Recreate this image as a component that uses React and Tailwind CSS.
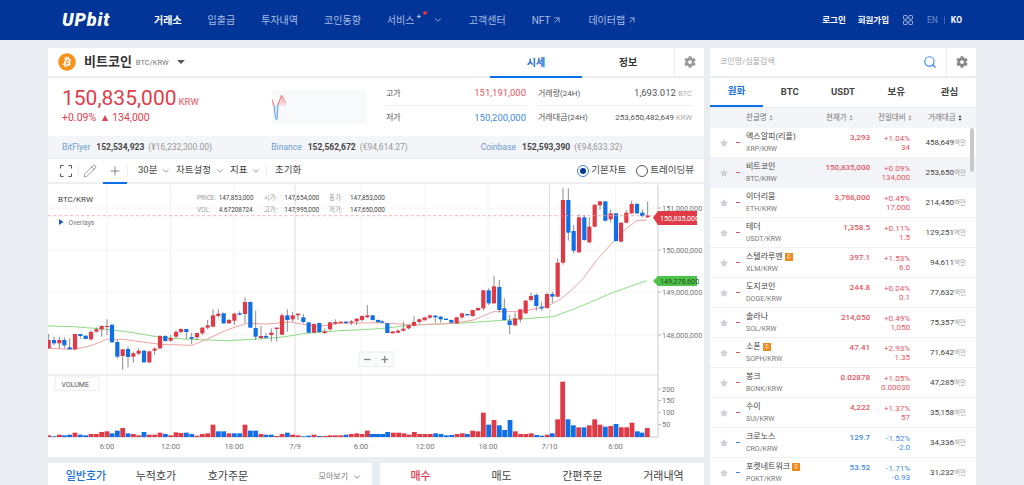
import React from 'react';
import { ChevronDown, ArrowUpRight, Pencil, Plus, Search } from 'lucide-react';
import { FaCog, FaStar, FaBitcoin } from 'react-icons/fa';

const RED = '#e03a47';
const BLUE = '#0f6fe6';

const z5 = [[26,300,325,282,325,'r'],[42,300,310,290,315,'b'],[58,300,310,290,327,'r'],[73,300,316,292,325,'b'],[89,322,328,295,328,'b'],[105,282,328,282,330,'r'],[121,282,288,282,296,'b'],[137,287,297,287,297,'b'],[153,276,298,270,302,'r'],[169,268,275,262,278,'r'],[185,258,268,255,290,'r'],[201,258,260,238,285,'r'],[216,254,307,254,308,'b'],[232,306,350,300,356,'b'],[248,328,348,328,390,'r'],[264,327,351,320,382,'b'],[280,340,350,335,368,'r'],[296,332,341,325,345,'r'],[312,332,367,330,368,'b'],[328,334,367,332,370,'r'],[344,326,332,322,345,'r'],[360,288,325,285,328,'r'],[376,288,303,286,305,'b'],[392,294,302,285,305,'r'],[408,276,290,270,295,'r'],[423,267,276,265,280,'r'],[439,267,276,267,298,'b'],[455,291,296,278,312,'b'],[471,279,292,278,300,'r'],[487,263,280,262,285,'r'],[503,256,263,240,268,'r'],[519,226,260,208,262,'r'],[535,221,228,208,233,'r'],[551,220,250,218,252,'b'],[567,240,250,236,252,'r'],[583,221,242,218,255,'r'],[599,220,224,214,226,'b'],[615,186,222,172,250,'r'],[631,186,263,184,264,'b'],[647,264,290,212,300,'b'],[663,288,294,258,298,'r'],[678,288,293,280,295,'b'],[694,278,285,265,305,'r'],[710,263,267,262,305,'r'],[726,226,284,220,285,'r'],[742,226,240,208,275,'b'],[758,226,238,215,245,'r'],[774,221,226,220,240,'r'],[790,232,246,222,250,'b'],[806,247,278,247,280,'b'],[822,252,278,250,280,'r'],[838,249,276,248,278,'b'],[854,274,279,265,282,'r'],[870,247,268,246,272,'r'],[886,246,251,238,254,'r'],[902,245,249,245,249,'r'],[918,245,249,243,252,'b'],[934,244,248,240,255,'r'],[950,236,244,234,255,'r'],[966,228,240,226,245,'r'],[982,226,232,195,234,'r'],[998,226,240,225,242,'b'],[1014,240,246,238,250,'b']];
const z6 = [[6,184,188,180,190,'b'],[22,190,219,190,219,'b'],[38,214,220,214,220,'r'],[54,212,218,208,220,'r'],[70,206,212,185,215,'r'],[86,196,205,194,208,'r'],[102,186,197,168,200,'r'],[118,178,186,175,190,'r'],[134,172,181,172,181,'r'],[150,166,173,164,176,'r'],[166,167,172,165,188,'b'],[182,170,178,168,188,'b'],[198,176,180,176,180,'b'],[214,180,188,178,190,'b'],[230,172,190,172,192,'r'],[246,160,172,158,178,'r'],[262,162,166,162,166,'b'],[278,150,168,150,170,'r'],[294,144,151,142,153,'r'],[310,91,145,90,152,'r'],[326,91,130,85,135,'b'],[342,79,130,48,132,'r'],[358,81,150,60,158,'b'],[373,145,180,115,182,'b'],[389,182,195,165,222,'b'],[405,175,196,158,198,'r'],[421,148,178,148,188,'r'],[437,122,160,120,162,'r'],[453,108,120,98,124,'r'],[469,105,138,100,152,'b'],[485,140,145,126,152,'b'],[501,102,144,98,146,'r'],[517,102,110,95,128,'b'],[533,8,110,-5,112,'r']];
const z4 = [[549,210,398,175,404,'r'],[565,210,308,175,332,'b'],[581,303,362,285,370,'b'],[597,262,367,252,368,'r'],[613,262,330,255,332,'b'],[628,290,337,262,340,'r'],[644,224,290,224,292,'r'],[660,214,226,212,240,'r'],[676,214,272,214,275,'b'],[692,250,268,238,278,'r'],[708,250,333,250,335,'b'],[723,278,335,278,337,'r'],[739,248,278,240,280,'r'],[755,222,250,212,252,'r'],[771,222,250,218,252,'b'],[787,248,258,238,262,'b'],[803,256,262,214,264,'r']];

const conv = (arr, ox, oy) => arr.map(([x, t, b, wt, wb, c]) => ({ x: ox + x / 3, t: oy + t / 3, b: oy + b / 3, wt: oy + wt / 3, wb: oy + wb / 3, c }));
const candles = [...conv(z5, 40, 240), ...conv(z6, 380, 260), ...conv(z4, 380, 130)];

const vol7 = [[26,'r',196],[42,'b',199],[58,'r',194],[73,'b',196],[89,'b',194],[105,'r',188],[121,'b',194],[137,'b',196],[153,'r',192],[169,'r',192],[185,'r',186],[201,'r',184],[216,'b',190],[232,'b',182],[248,'r',174],[264,'b',190],[280,'r',192],[296,'r',196],[312,'b',186],[328,'r',194],[344,'r',194],[360,'r',188],[376,'b',192],[392,'r',196],[408,'r',187],[423,'r',189],[439,'b',188],[455,'b',192],[471,'r',197],[487,'r',192],[503,'r',190],[519,'r',164],[535,'b',184],[551,'b',184],[567,'r',190],[583,'b',190],[599,'b',190],[615,'r',164],[631,'b',182],[647,'b',182],[663,'r',192],[678,'b',194],[694,'b',194],[710,'r',198],[726,'r',192],[742,'b',188],[758,'r',194],[774,'r',196],[790,'b',199],[806,'b',197],[822,'r',194],[838,'b',198],[854,'r',198],[870,'r',196],[886,'r',196],[902,'r',196],[918,'b',194],[934,'r',192],[950,'r',190],[966,'r',192],[982,'r',182],[998,'b',192],[1014,'b',192]];
const vol8 = [[5,'b',192],[22,'b',192],[38,'b',192],[53,'b',186],[70,'r',188],[86,'r',188],[102,'r',190],[117,'r',194],[133,'r',186],[149,'r',192],[165,'r',192],[181,'r',192],[197,'b',190],[213,'b',192],[229,'b',196],[245,'b',195],[261,'r',192],[277,'r',190],[292,'b',192],[308,'r',182],[324,'r',184],[340,'r',128],[356,'b',164],[372,'r',150],[388,'b',166],[404,'b',180],[420,'b',150],[436,'r',184],[452,'r',192],[468,'r',192],[484,'r',190],[500,'b',195],[516,'b',197],[532,'r',194],[547,'b',190],[563,'r',148],[578,'r',35],[594,'b',148],[610,'b',166],[626,'r',172],[642,'b',172],[658,'r',166],[674,'r',148],[690,'r',164],[706,'b',170],[722,'r',168],[738,'b',162],[754,'r',172],[770,'r',172],[786,'r',158],[802,'b',184],[816,'b',188],[832,'r',174]];
const bars = [...vol7.map(([x, c, t]) => ({ x: 40 + x / 3, c, t: 370 + t / 3 })), ...vol8.map(([x, c, t]) => ({ x: 370 + x / 3, c, t: 370 + t / 3 }))];

const pts = (arr, ox, oy) => arr.map(([x, y]) => `${ox + x / 3},${oy + y / 3}`);
const redLine = [
  ...pts([[24,325],[100,328],[150,318],[200,298],[250,298],[300,305],[360,313],[455,316],[500,298],[560,270],[620,250],[680,252],[750,246],[830,260],[900,250],[1020,248]], 40, 240),
  ...pts([[100,195],[220,190],[280,180],[340,155],[420,155],[500,140],[540,118],[575,90],[610,55]], 380, 260),
  ...pts([[650,390],[700,335],[740,295],[770,272],[800,270]], 380, 130),
].join(' ');
const greenLine = [
  ...pts([[24,258],[100,260],[200,268],[280,278],[360,292],[450,298],[560,302],[640,298],[720,292],[800,280],[900,272],[1020,266]], 40, 240),
  ...pts([[100,195],[230,190],[370,181],[520,170],[600,140],[700,97],[800,62]], 380, 260),
].join(' ');

const vGrid = [[107,0],[170.5,0],[234,0],[295,1],[361,0],[425,0],[488,0],[549.5,1],[615.5,0]];
const timeLabels = [[107,'6:00'],[170.5,'12:00'],[234,'18:00'],[295,'7/9'],[361,'6:00'],[425,'12:00'],[488,'18:00'],[549.5,'7/10'],[615.5,'6:00']];

function Chart() {
  return (
    <svg viewBox="48 185 656 272" className="block w-full h-68 mt-px" fontFamily="Roboto, 'Noto Sans CJK KR', sans-serif">
      {[208, 250, 292, 335].map((y) => <line key={y} x1="48" x2="658" y1={y} y2={y} stroke="#f4f4f6" />)}
      {vGrid.map(([x, d]) => <line key={x} x1={x} x2={x} y1="185" y2="437" stroke={d ? '#dcdde0' : '#f2f3f5'} />)}
      <line x1="48" x2="658" y1="375" y2="375" stroke="#dddddd" strokeWidth="1" />
      <line x1="658" x2="658" y1="185" y2="437" stroke="#cccccc" />
      <line x1="48" x2="658" y1="437" y2="437" stroke="#cccccc" />
      <polyline points={greenLine} fill="none" stroke="#8fdb86" strokeWidth="1" />
      <polyline points={redLine} fill="none" stroke="#f0a3a3" strokeWidth="1" />
      {candles.map((c, i) => (
        <g key={i}>
          <line x1={c.x} x2={c.x} y1={c.wt} y2={c.wb} stroke="#6b6f78" strokeWidth="0.8" />
          <rect x={c.x - 2.1} y={c.t} width="4.2" height={Math.max(c.b - c.t, 1)} fill={c.c === 'r' ? RED : BLUE} />
        </g>
      ))}
      {bars.map((b, i) => <rect key={i} x={b.x - 2.4} y={b.t} width="4.8" height={437 - b.t} fill={b.c === 'r' ? RED : BLUE} />)}
      <line x1="48" x2="654" y1="215.7" y2="215.7" stroke="#f39ca2" strokeWidth="0.8" strokeDasharray="3 2.5" />

      <text x="58" y="202" fontSize="8" fill="#444">BTC/KRW</text>
      <g fontSize="6.4" fill="#444">
        <text x="197" y="200" fill="#999">PRICE:</text><text x="218.7" y="200">147,853,000</text>
        <text x="263.7" y="200" fill="#999">시가:</text><text x="284.3" y="200">147,654,000</text>
        <text x="329" y="200" fill="#999">종가:</text><text x="350" y="200">147,853,000</text>
        <text x="197" y="211.5" fill="#999">VOL:</text><text x="218.7" y="211.5">4.67208724</text>
        <text x="263.7" y="211.5" fill="#999">고가:</text><text x="284.3" y="211.5">147,995,000</text>
        <text x="329" y="211.5" fill="#999">저가:</text><text x="350" y="211.5">147,650,000</text>
      </g>
      <polygon points="59,219 63.5,222 59,225" fill="#1a5fc0" />
      <text x="68.5" y="224.5" fontSize="6.8" fill="#777">Overlays</text>

      <g fontSize="7.4" fill="#777">
        {[['151,000,000',208],['150,000,000',250],['149,000,000',292],['148,000,000',335]].map(([t, y]) => (
          <g key={t}><line x1="658" x2="661" y1={y} y2={y} stroke="#bbb" /><text x="662" y={y + 2.6}>{t}</text></g>
        ))}
        {[['200',389],['150',400.5],['100',412.5],['50',424.5]].map(([t, y]) => (
          <g key={t}><line x1="658" x2="661" y1={y} y2={y} stroke="#bbb" /><text x="662" y={y + 2.6}>{t}</text></g>
        ))}
      </g>
      <g fontSize="7.6" fill="#777" textAnchor="middle">
        {timeLabels.map(([x, t]) => <text key={x} x={x} y="448.5">{t}</text>)}
      </g>

      <polygon points="653,217.5 658,211 697,211 697,225 658,225" fill={RED} />
      <text x="660" y="220.5" fontSize="7.2" fill="#fff">150,835,000</text>
      <polygon points="653,281 658,276 697,276 697,286 658,286" fill="#4fc24a" />
      <text x="660" y="283.6" fontSize="7.2" fill="#1f4f1f">149,278,600</text>

      <rect x="55" y="377" width="44" height="13.5" fill="#fff" stroke="#eceef1" />
      <text x="61.5" y="386.5" fontSize="7" fill="#555">VOLUME</text>
      <rect x="359" y="352" width="35" height="14.5" fill="#fafbfc" stroke="#eceef1" />
      <line x1="364" x2="370.5" y1="359.5" y2="359.5" stroke="#888" strokeWidth="1.3" />
      <line x1="381.5" x2="388" y1="359.5" y2="359.5" stroke="#888" strokeWidth="1.3" />
      <line x1="384.7" x2="384.7" y1="356" y2="363" stroke="#888" strokeWidth="1.3" />
    </svg>
  );
}

const SortIcon = ({ dark }) => (
  <svg viewBox="0 0 6 8" className="w-1 h-2 ml-0.5 inline-block" fill={dark ? '#333' : '#999'}>
    <path d="M3 0 5.5 3H.5zM3 8 .5 5h5z" />
  </svg>
);

const coins = [
  ['엑스알피(리플)', 'XRP/KRW', '3,293', '+1.04%', '34', '458,649', 'r'],
  ['비트코인', 'BTC/KRW', '150,835,000', '+0.09%', '134,000', '253,650', 'r', 0, 1],
  ['이더리움', 'ETH/KRW', '3,768,000', '+0.45%', '17,000', '214,450', 'r'],
  ['테더', 'USDT/KRW', '1,358.5', '+0.11%', '1.5', '129,251', 'r'],
  ['스텔라루멘', 'XLM/KRW', '397.1', '+1.53%', '6.0', '94,611', 'r', 1],
  ['도지코인', 'DOGE/KRW', '244.8', '+0.04%', '0.1', '77,632', 'r'],
  ['솔라나', 'SOL/KRW', '214,050', '+0.49%', '1,050', '75,357', 'r'],
  ['소폰', 'SOPH/KRW', '47.41', '+2.93%', '1.35', '71,642', 'r', 1],
  ['봉크', 'BONK/KRW', '0.02878', '+1.05%', '0.00030', '47,285', 'r'],
  ['수이', 'SUI/KRW', '4,222', '+1.37%', '57', '35,158', 'r'],
  ['크로노스', 'CRO/KRW', '129.7', '-1.52%', '-2.0', '34,336', 'b'],
  ['포켓네트워크', 'POKT/KRW', '53.52', '-1.71%', '-0.93', '31,232', 'b', 1],
];

function CoinRow({ c }) {
  const [name, sym, price, pct, diff, vol, dir, badge, active] = c;
  const color = dir === 'r' ? 'text-[#e5555f]' : 'text-[#3f8ae6]';
  return (
    <div className={`h-7.5 shrink-0 flex items-center pr-2.5 border-b border-[#f1f2f5] ${active ? 'bg-[#f3f4f7]' : 'bg-white'}`}>
      <div className="w-9 shrink-0 flex items-center pl-2.5 gap-2">
        <FaStar className="size-2 text-[#cfd1d6]" />
        <span className={`w-1 h-px ${dir === 'r' ? 'bg-[#e5555f]' : 'bg-[#3f8ae6]'}`} />
      </div>
      <div className="flex-1 min-w-0 flex flex-col">
        <div className="flex items-center gap-0.5 text-[8px] leading-3 text-[#444]">
          <span>{name}</span>
          {badge ? <span className="size-2 flex items-center justify-center bg-[#ee8a1c] text-white text-[5px] leading-none">주</span> : null}
        </div>
        <div className="text-[7px] leading-3 text-[#777]">{sym}</div>
      </div>
      <div className={`self-start pt-1 text-[8px] font-medium leading-3 ${color}`}>{price}</div>
      <div className={`w-10 shrink-0 text-right text-[8px] leading-[9px] ${color}`}>
        <div>{pct}</div>
        <div>{diff}</div>
      </div>
      <div className="w-14 shrink-0 text-right text-[8px] leading-3 text-[#444]">
        {vol}<span className="text-[6.5px] text-[#aaa]">백만</span>
      </div>
    </div>
  );
}

export default function App() {
  return (
    <div className="h-screen overflow-hidden bg-[#e9ecf1] font-['Roboto','Noto_Sans_CJK_KR',sans-serif]">
      <header className="h-10 bg-[#033599] flex items-center pl-15.5 text-[10px]">
        <div className="w-23 text-white text-lg font-black italic tracking-wider leading-none">UPbit</div>
        <nav className="flex items-center gap-6.5 text-[#a9bde2]">
          <span className="text-white font-bold">거래소</span>
          <span>입출금</span>
          <span>투자내역</span>
          <span>코인동향</span>
          <span className="flex items-center relative w-14">
            서비스
            <span className="text-[8px] leading-none ml-0.5 -mt-1.5 text-white">+</span>
            <span className="absolute left-9 -top-0.5 size-1 rounded-full bg-[#e0303c]" />
            <ChevronDown className="size-2.5 ml-auto" />
          </span>
          <span>고객센터</span>
          <span className="flex items-center gap-0.5">NFT <ArrowUpRight className="size-2.5" /></span>
          <span className="flex items-center gap-0.5">데이터랩 <ArrowUpRight className="size-2.5" /></span>
        </nav>
        <div className="ml-auto pr-15.5 flex items-center text-white text-[8.5px] font-bold">
          <span>로그인</span>
          <span className="ml-3">회원가입</span>
          <svg viewBox="0 0 10 10" className="size-2.5 ml-3.5" fill="none" stroke="#c3d0ea" strokeWidth="0.8">
            <rect x=".5" y=".5" width="3.7" height="3.7" rx=".8" /><rect x="5.8" y=".5" width="3.7" height="3.7" rx=".8" />
            <rect x=".5" y="5.8" width="3.7" height="3.7" rx=".8" /><rect x="5.8" y="5.8" width="3.7" height="3.7" rx=".8" />
          </svg>
          <span className="ml-3.5 text-[#5a7cc0] font-medium">EN</span>
          <span className="mx-1.5 w-px h-2 bg-[#3c62b0]" />
          <span>KO</span>
        </div>
      </header>

      <main className="flex gap-1.5 px-12 pt-2">
        <section className="w-164 shrink-0 flex flex-col gap-1.5">
          <div className="bg-white flex flex-col">
            <div className="h-7.5 flex items-stretch border-b-2 border-[#eceef2]">
              <div className="flex-1 flex items-center pl-2.5">
                <FaBitcoin className="size-4.5 text-[#f7931a] mr-2" />
                <span className="text-[13px] font-bold text-[#333]">비트코인</span>
                <span className="text-[7.5px] text-[#777] ml-1 mt-0.5">BTC/KRW</span>
                <span className="ml-2 border-x-4 border-t-4 border-x-transparent border-t-[#555]" />
              </div>
              <div className="w-23 -mb-0.5 border-b-2 border-[#0f6fe6] flex items-center justify-center text-[10px] font-bold text-[#1a6fd8]">시세</div>
              <div className="w-23 flex items-center justify-center text-[10px] font-bold text-[#333]">정보</div>
              <div className="w-7.5 border-l border-[#eceef2] flex items-center justify-center">
                <FaCog className="size-3 text-[#9a9a9a]" />
              </div>
            </div>

            <div className="h-14.5 flex">
              <div className="w-56 pl-3.5 pt-1.5 text-[#e23d4a]">
                <div className="flex items-baseline leading-7">
                  <span className="text-[21px]">150,835,000</span>
                  <span className="text-[9.5px] font-medium ml-0.5 text-[#e87a82]">KRW</span>
                </div>
                <div className="text-[10.5px] leading-3 -mt-1 flex items-center gap-1">
                  +0.09%
                  <span className="border-x-[3.5px] border-b-[6px] border-x-transparent border-b-[#e23d4a] ml-0.5" />
                  134,000
                </div>
              </div>
              <div className="w-28.5 pt-3">
                <svg viewBox="0 0 93 33" className="w-23.5 h-8.5 bg-[#f8f9fb]">
                  <path d="M0 10 L2 16 L3.5 15 L7 10 L9.5 5 L12 10 L14 13 L14 15 L0 15Z" fill="#f9d5d8" />
                  <path d="M0 9 L2 15 M6 14 L9.5 5 L12 10 L14 12" stroke="#e5555f" strokeWidth=".8" fill="none" />
                  <path d="M2 15 L3.5 28 L5 29 L6 14" stroke="#3f8ae6" strokeWidth=".8" fill="#dceafb" />
                </svg>
              </div>
              <div className="w-35 flex flex-col text-[8px] text-[#555]">
                <div className="h-6 mt-1 flex items-center justify-between border-b border-[#eceef2]">
                  <span>고가</span><span className="text-[9.5px] text-[#e5555f]">151,191,000</span>
                </div>
                <div className="h-6 flex items-center justify-between">
                  <span>저가</span><span className="text-[9.5px] text-[#3f8ae6]">150,200,000</span>
                </div>
              </div>
              <div className="w-38.5 ml-3 flex flex-col text-[8px] text-[#555]">
                <div className="h-6 mt-1 flex items-center justify-between border-b border-[#eceef2]">
                  <span>거래량(24H)</span><span className="text-[9.5px]">1,693.012 <span className="text-[7.5px] text-[#aaa]">BTC</span></span>
                </div>
                <div className="h-6 flex items-center justify-between">
                  <span>거래대금(24H)</span><span className="text-[8px]">253,650,482,649 <span className="text-[7.5px] text-[#aaa]">KRW</span></span>
                </div>
              </div>
            </div>

            <div className="h-5.5 bg-[#f4f5f8] grid grid-cols-3 items-center px-3.5 text-[8.5px]">
              {[['BitFlyer','152,534,923','(¥16,232,300.00)'],['Binance','152,562,672','(€94,614.27)'],['Coinbase','152,593,390','(€94,633.32)']].map(([n, p, e]) => (
                <div key={n} className="flex items-center gap-1.5">
                  <span className="text-[#6a9bd6]">{n}</span>
                  <span className="font-bold text-[#444]">{p}</span>
                  <span className="text-[#999] -ml-0.5">{e}</span>
                </div>
              ))}
            </div>

            <div className="h-6.5 flex items-stretch border-t border-[#eceef2] border-b-2 text-[9.5px] text-[#444]">
              <div className="w-6 flex items-center justify-end">
                <svg viewBox="0 0 12 12" className="size-3" fill="none" stroke="#555" strokeWidth="1">
                  <path d="M.5 3.5v-3h3M8.5.5h3v3M11.5 8.5v3h-3M3.5 11.5h-3v-3" />
                </svg>
              </div>
              <div className="ml-1.5 my-1.5 w-px bg-[#eceef2]" />
              <div className="w-3.5 ml-1 flex items-center"><Pencil className="size-3.5 text-[#666]" strokeWidth={1.1} /></div>
              <div className="w-6 -mb-0.5 ml-1.5 border-b-2 border-[#0f6fe6] flex items-center justify-center"><Plus className="size-3.5 text-[#555]" strokeWidth={1.2} /></div>
              <div className="my-1.5 w-px bg-[#eceef2]" />
              <div className="flex items-center ml-2.5">
                <span className="w-9.5 flex items-center gap-1">30분<ChevronDown className="size-2.5 text-[#888]" /></span>
                <span className="w-13.5 flex items-center gap-1">차트설정<ChevronDown className="size-2.5 text-[#888]" /></span>
                <span className="w-9 flex items-center gap-1">지표<ChevronDown className="size-2.5 text-[#888]" /></span>
                <span className="w-px h-3 bg-[#eceef2] mr-2" />
                <span>초기화</span>
              </div>
              <div className="ml-auto flex items-center pr-2.5">
                <span className="size-3 rounded-full border border-[#3f7fd6] flex items-center justify-center mr-0.5"><span className="size-1.5 rounded-full bg-[#033599]" /></span>
                <span className="mr-2.5">기본차트</span>
                <span className="size-3 rounded-full border border-[#555] mr-0.5" />
                <span>트레이딩뷰</span>
              </div>
            </div>

            <Chart />
          </div>

          <div className="flex gap-2">
            <div className="w-81 bg-white h-8 flex items-start pt-1.5 text-[11px] text-[#444]">
              <span className="w-18 text-center pl-1 font-medium text-[#1a6fd8]">일반호가</span>
              <span className="w-18 text-center">누적호가</span>
              <span className="w-18 text-center">호가주문</span>
              <span className="ml-auto pr-2.5 pt-0.5 flex items-center gap-1 text-[8px] text-[#777]">모아보기<ChevronDown className="size-2.5" /></span>
            </div>
            <div className="flex-1 bg-white h-8 grid grid-cols-4 pt-1.5 text-[11px] text-[#444] text-center">
              <span className="font-medium text-[#e23d4a]">매수</span>
              <span>매도</span>
              <span>간편주문</span>
              <span>거래내역</span>
            </div>
          </div>
        </section>

        <aside className="flex-1 min-w-0 flex flex-col">
          <div className="h-7 bg-white flex items-stretch">
            <div className="flex-1 flex items-center pl-2.5 text-[8px] text-[#aaa]">코인명/심볼검색</div>
            <div className="w-8 flex items-center justify-center"><Search className="size-3.5 text-[#3f8ae6]" /></div>
            <div className="w-7.5 border-l border-[#eceef2] flex items-center justify-center"><FaCog className="size-3 text-[#8a8a8a]" /></div>
          </div>
          <div className="h-7.5 mt-0.5 bg-white border-b border-[#e9ecf1] grid grid-cols-5 text-[9.5px] font-bold text-[#444]">
            <div className="flex items-center justify-center border-b-2 border-[#0f6fe6] text-[#1a6fd8]">원화</div>
            <div className="flex items-center justify-center">BTC</div>
            <div className="flex items-center justify-center">USDT</div>
            <div className="flex items-center justify-center">보유</div>
            <div className="flex items-center justify-center">관심</div>
          </div>
          <div className="h-5 bg-[#f4f5f8] flex items-center text-[7.5px] text-[#777] pr-2.5">
            <div className="flex-1 pl-9 flex items-center">한글명<SortIcon /></div>
            <div className="w-12 -mr-0.5 flex items-center">현재가<SortIcon /></div>
            <div className="w-14 pl-1.5 flex items-center">전일대비<SortIcon /></div>
            <div className="w-10.5 -mr-1 flex items-center whitespace-nowrap">거래대금<SortIcon dark /></div>
          </div>
          <div className="relative flex flex-col">
            {coins.map((c) => <CoinRow key={c[1]} c={c} />)}
            <div className="absolute right-0.5 top-0 w-1 h-11 rounded-full bg-[#c9c9c9]" />
          </div>
        </aside>
      </main>
    </div>
  );
}
